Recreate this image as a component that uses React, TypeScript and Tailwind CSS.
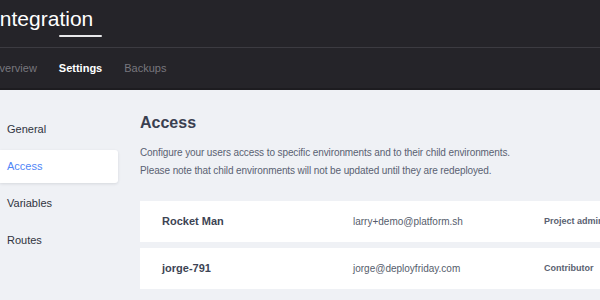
const tabs = [
  { label: "Overview", active: false },
  { label: "Settings", active: true },
  { label: "Backups", active: false },
];

const menu = ["General", "Access", "Variables", "Routes"];

const users = [
  { name: "Rocket Man", email: "larry+demo@platform.sh", role: "Project admin" },
  { name: "jorge-791", email: "jorge@deployfriday.com", role: "Contributor" },
];

const App = () => {
  return (
    <div className="w-[600px] h-[300px] overflow-hidden bg-[#eff1f5] font-['Liberation_Sans',Arial,sans-serif]">
      <header className="bg-[#252429]">
        <div className="h-[48px] border-b border-[#3c3b41] pt-[7px]">
          <h1 className="-ml-[6px] text-[21px] leading-[24px] text-white whitespace-nowrap">
            Integration
          </h1>
        </div>
        <nav className="flex h-[42px] items-center gap-[22px] -ml-[9px] border-b-2 border-[#1d1c20]">
          {tabs.map((t) => (
            <div
              key={t.label}
              className={
                t.active
                  ? "relative text-[11px] font-bold text-white"
                  : "text-[11px] text-[#78777e]"
              }
            >
              {t.active && (
                <span className="absolute left-0 right-0 -top-[25px] h-[2px] rounded-full bg-[#e8e8ea]" />
              )}
              {t.label}
            </div>
          ))}
        </nav>
      </header>

      <div className="flex gap-[22px]">
        <aside className="w-[118px] shrink-0 pt-[23px] flex flex-col gap-[4px]">
          {menu.map((m) => (
            <div
              key={m}
              className={
                m === "Access"
                  ? "h-[33px] flex items-center pl-[7px] text-[11px] text-[#4f86f7] bg-white rounded-r-[3px] shadow-[0_1px_3px_rgba(30,40,60,0.12)]"
                  : "h-[33px] flex items-center pl-[7px] text-[11px] text-[#2f3440]"
              }
            >
              {m}
            </div>
          ))}
        </aside>

        <main className="flex-1 pt-[21px]">
          <h2 className="text-[16px] leading-[24px] font-bold text-[#3a4050]">Access</h2>
          <div className="mt-[9px] text-[10px] leading-[18px] tracking-[-0.1px] text-[#5a6172] whitespace-nowrap">
            <p>Configure your users access to specific environments and to their child environments.</p>
            <p>Please note that child environments will not be updated until they are redeployed.</p>
          </div>
          <div className="mt-[21px] flex flex-col gap-[6px]">
            {users.map((u) => (
              <div key={u.name} className="h-[41px] flex items-center bg-white whitespace-nowrap">
                <span className="w-[213px] pl-[22px] shrink-0 text-[11px] font-bold text-[#3d4454]">
                  {u.name}
                </span>
                <span className="w-[191px] shrink-0 text-[10px] text-[#565d6c]">{u.email}</span>
                <span className="text-[9px] font-bold text-[#5a6171]">{u.role}</span>
              </div>
            ))}
          </div>
        </main>
      </div>
    </div>
  );
};

export default App;
